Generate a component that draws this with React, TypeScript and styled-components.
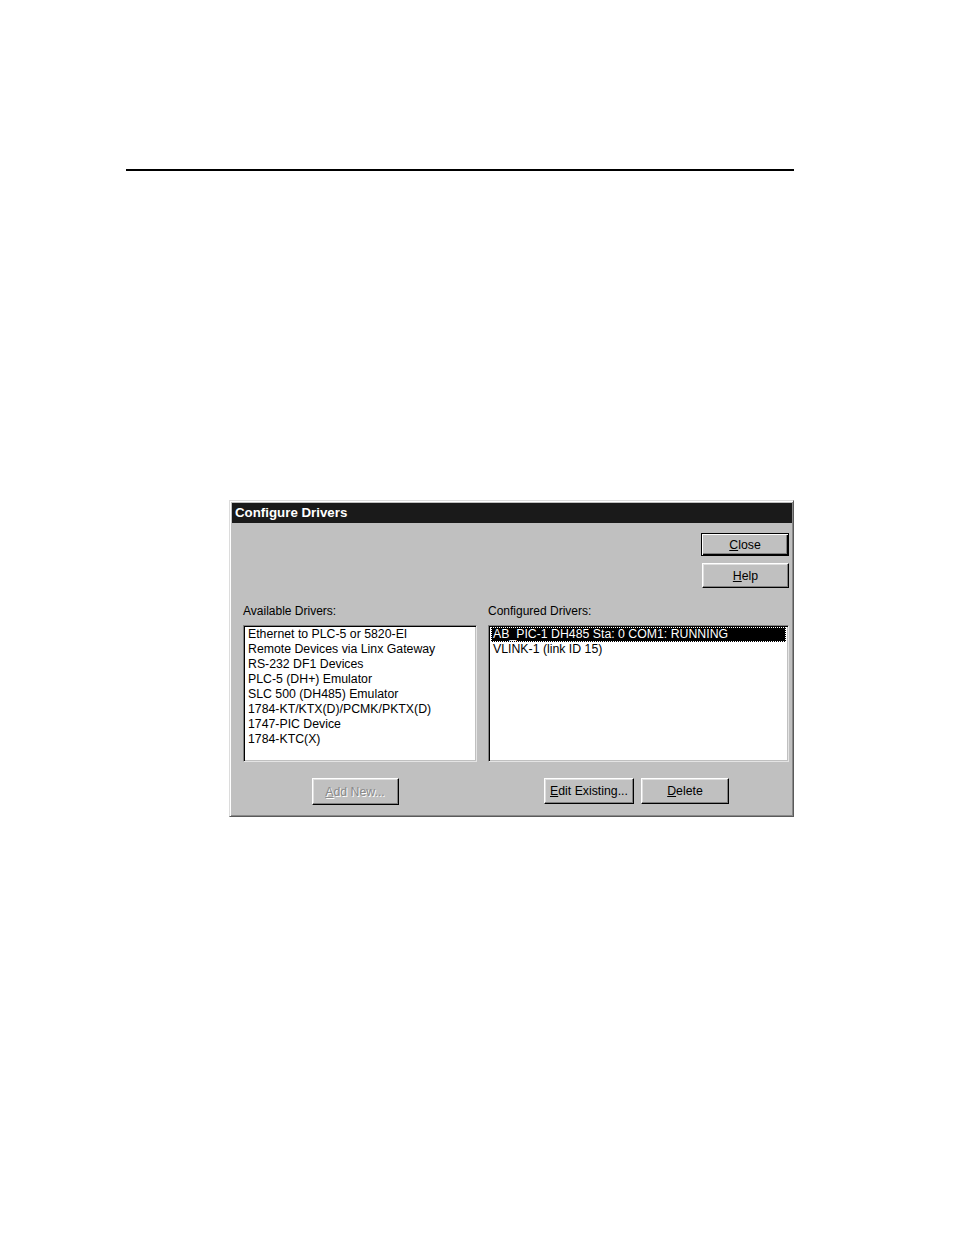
import React from 'react';
import styled, { createGlobalStyle } from 'styled-components';

const GlobalStyle = createGlobalStyle`
  html, body {
    margin: 0;
    padding: 0;
    background: #ffffff;
  }
  body {
    font-family: 'Liberation Sans', Arial, sans-serif;
  }
`;

const available = [
  'Ethernet to PLC-5 or 5820-EI',
  'Remote Devices via Linx Gateway',
  'RS-232 DF1 Devices',
  'PLC-5 (DH+) Emulator',
  'SLC 500 (DH485) Emulator',
  '1784-KT/KTX(D)/PCMK/PKTX(D)',
  '1747-PIC Device',
  '1784-KTC(X)',
];

const configured = ['AB_PIC-1 DH485 Sta: 0 COM1: RUNNING', 'VLINK-1 (link ID 15)'];

function App() {
  return (
    <Page>
      <GlobalStyle />
      <Rule />
      <Dialog>
        <TitleBar>Configure Drivers</TitleBar>
        <Body>
          <SideButtons>
            <Button $default $w={88} $h={23}>
              <u>C</u>lose
            </Button>
            <Button $w={87} $h={25}>
              <u>H</u>elp
            </Button>
          </SideButtons>

          <Label>Available Drivers:</Label>
          <Label>Configured Drivers:</Label>

          <ListBox>
            {available.map((item) => (
              <Item key={item}>{item}</Item>
            ))}
          </ListBox>
          <ListBox>
            {configured.map((item, i) => (
              <Item key={item} $selected={i === 0}>
                {item}
              </Item>
            ))}
          </ListBox>

          <ButtonRow $shift={-5}>
            <Button $disabled $w={87} $h={27}>
              <u>A</u>dd New...
            </Button>
          </ButtonRow>
          <ButtonRow $shift={-2}>
            <Button $w={90} $h={26}>
              <u>E</u>dit Existing...
            </Button>
            <Button $w={88} $h={26}>
              <u>D</u>elete
            </Button>
          </ButtonRow>
        </Body>
      </Dialog>
    </Page>
  );
}

const Page = styled.div`
  padding: 169px 0 0 126px;
  min-height: 1235px;
  box-sizing: border-box;
`;

const Rule = styled.div`
  width: 668px;
  height: 2px;
  background: #000;
`;

const Dialog = styled.div`
  margin: 329px 0 0 103px;
  width: 565px;
  box-sizing: border-box;
  background: #c0c0c0;
  border-top: 1px solid #dcdcdc;
  border-left: 1px solid #dcdcdc;
  border-right: 1px solid #5a5a5a;
  border-bottom: 1px solid #5a5a5a;
  box-shadow: inset 1px 1px 0 #ffffff, inset -1px -1px 0 #8a8a8a;
  padding: 2px 1px 2px 2px;
`;

const TitleBar = styled.div`
  height: 20px;
  background: #1a1a1a;
  color: #ffffff;
  font-weight: bold;
  font-size: 13.3px;
  line-height: 20px;
  padding-left: 3px;
`;

const Body = styled.div`
  display: grid;
  grid-template-columns: 234px 301px;
  column-gap: 11px;
  grid-template-rows: auto auto auto auto;
  padding: 10px 0 9px 11px;
`;

const SideButtons = styled.div`
  grid-column: 1 / span 2;
  display: flex;
  flex-direction: column;
  align-items: flex-end;
  gap: 7px;
`;

const Label = styled.div`
  margin-top: 16px;
  font-size: 12px;
  line-height: 15px;
  color: #000;
`;

const ListBox = styled.div`
  margin-top: 6px;
  height: 137px;
  box-sizing: border-box;
  background: #ffffff;
  border-top: 1px solid #808080;
  border-left: 1px solid #808080;
  border-right: 1px solid #e4e4e4;
  border-bottom: 1px solid #e4e4e4;
  box-shadow: inset 1px 1px 0 #000000, inset -1px -1px 0 #c0c0c0;
  padding: 1px 2px;
`;

const Item = styled.div<{ $selected?: boolean }>`
  font-size: 12.3px;
  line-height: 13px;
  height: 15px;
  box-sizing: border-box;
  padding: 0 1px;
  white-space: nowrap;
  color: ${(p) => (p.$selected ? '#ffffff' : '#000000')};
  background: ${(p) => (p.$selected ? '#000000' : 'transparent')};
  border: 1px dotted ${(p) => (p.$selected ? '#ffffff' : 'transparent')};
`;

const ButtonRow = styled.div<{ $shift: number }>`
  margin-top: 16px;
  display: flex;
  justify-content: center;
  gap: 7px;
  transform: translateX(${(p) => p.$shift}px);
`;

const Button = styled.div<{ $w: number; $h: number; $default?: boolean; $disabled?: boolean }>`
  width: ${(p) => p.$w}px;
  height: ${(p) => p.$h}px;
  box-sizing: border-box;
  display: flex;
  align-items: center;
  justify-content: center;
  font-size: 12.3px;
  background: #c0c0c0;
  color: ${(p) => (p.$disabled ? '#8a8a8a' : '#000')};
  text-shadow: ${(p) => (p.$disabled ? '1px 1px 0 #ffffff' : 'none')};
  border: 1px solid #000;
  border-top-color: ${(p) => (p.$default ? '#000' : '#ffffff')};
  border-left-color: ${(p) => (p.$default ? '#000' : '#ffffff')};
  box-shadow: ${(p) =>
    p.$default
      ? 'inset 1px 1px 0 #ffffff, inset -1px -1px 0 #000, inset -2px -2px 0 #808080'
      : 'inset -1px -1px 0 #808080, inset 1px 1px 0 #dfdfdf'};
  u {
    text-decoration: underline;
    text-underline-offset: 1px;
  }
`;

export default App;
